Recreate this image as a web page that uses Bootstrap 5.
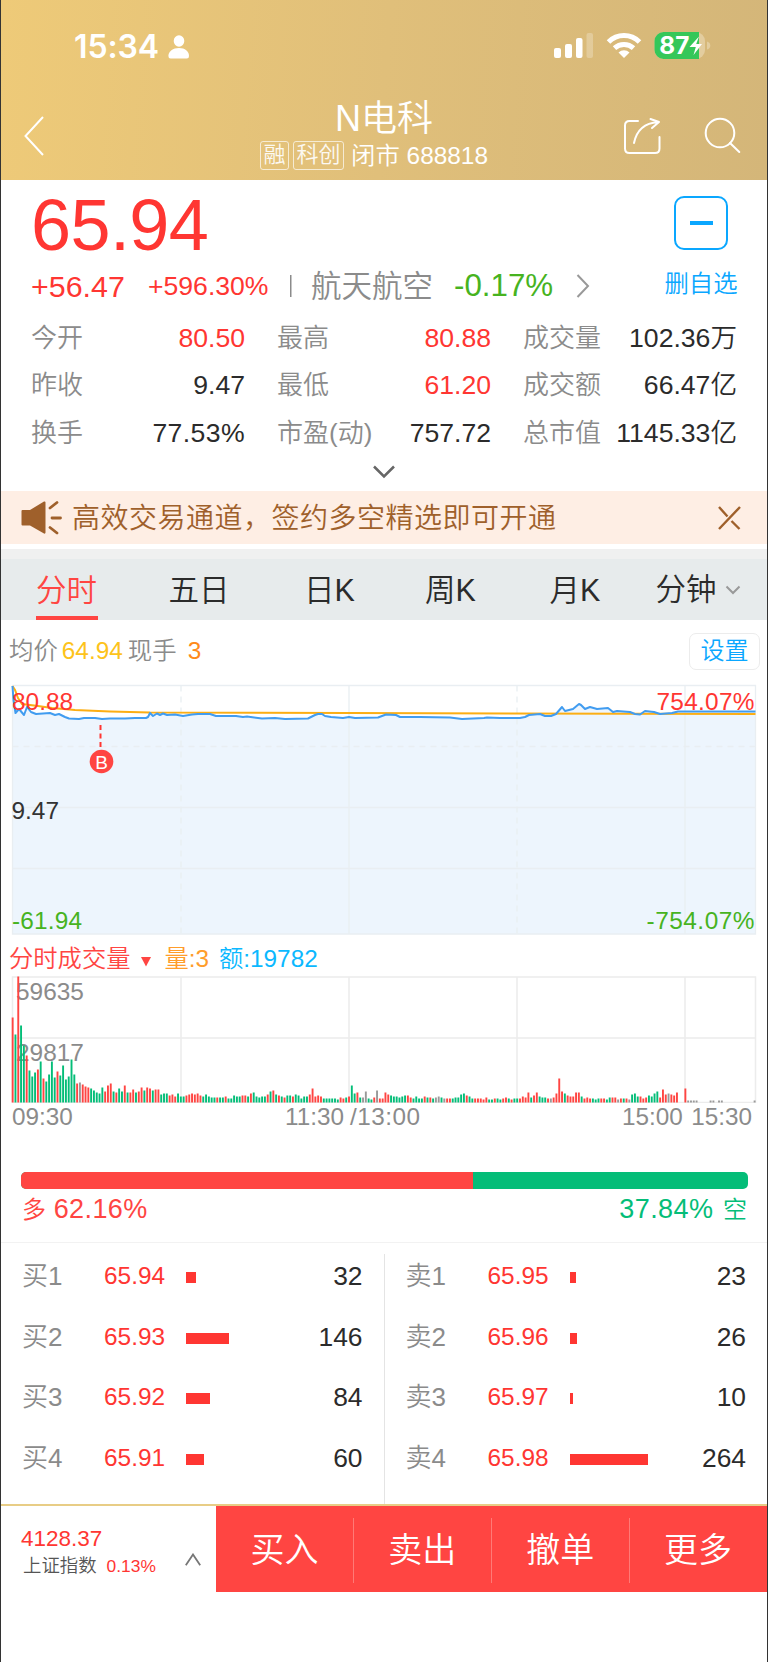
<!DOCTYPE html>
<html lang="zh-CN">
<head>
<meta charset="utf-8">
<meta name="viewport" content="width=device-width, initial-scale=1">
<title>N电科 688818</title>
<link href="https://cdn.jsdelivr.net/npm/bootstrap@5.3.0/dist/css/bootstrap.min.css" rel="stylesheet">
<style>
  body { font-family: "Liberation Sans", "Noto Sans CJK SC", sans-serif; font-weight: 350; color: #2b2b2b; line-height: 1; background: #fff; }
  .phone { height: 1662px; border-left: 1px solid #333; border-right: 1px solid #333; overflow: hidden; white-space: nowrap; }
  .up { color: #ff3632; } .down { color: #47b31f; } .dim { color: #8b8b8b; } .sky { color: #0aa7ff; }
  svg { display: block; flex: none; }
  .hero { height: 180px; background: linear-gradient(94deg, #eeca78, #e0bf7a 50%, #d4b679); color: #fff; }
  .status { height: 88px; padding: 0 56px 0 73px; font-family: Inter, sans-serif; }
  .clock { font-size: 32px; font-weight: 600; letter-spacing: -.1px; }
  .titlebar { height: 92px; padding: 0 26px 0 23px; }
  .stock-name { font-size: 36px; height: 40px; line-height: 40px; }
  .tagbox { border: 1.5px solid rgba(255,255,255,.75); border-radius: 3px; font-size: 22px; height: 29px; line-height: 26px; padding: 0 2.500px; opacity: .9; }
  .code { font-size: 24.4px; line-height: 30px; }
  .quote { height: 311px; padding: 0 30px 0 30px; }
  .last { font-size: 72px; line-height: 84px; height: 84px; letter-spacing: -.6px; margin-top: 3px; }
  .pill { width: 54px; height: 54px; border: 2px solid #0aa7ff; border-radius: 10px; }
  .pill i { width: 23px; height: 4px; background: #0aa7ff; }
  .chg { height: 40px; line-height: 40px; margin-top: -1px; }
  .facts { display: grid; grid-template-columns: repeat(3, 214px); column-gap: 32px; grid-auto-rows: 47.7px; align-items: center; font-size: 26.6px; margin-top: 8px; }
  .facts span { font-size: 26px; }
  .facts .pct { letter-spacing: .4px; }
  .notice { height: 53px; background: #feeee4; color: #9f602b; font-size: 28px; letter-spacing: .5px; padding: 0 26px 0 19px; }
  .band { height: 10px; background: #f0f0f0; margin-top: 5px; }
  .tabs { height: 61px; background: #e7ebec; display: grid; grid-template-columns: 132.5px 135.5px 121px 124.5px 106px auto; padding-left: 35px; font-size: 30.5px; }
  .tabs > div { height: 61px; line-height: 63px; }
  .tabs .on { width: 62px; color: #ff4542; border-bottom: 4px solid #ff4542; }
  .info { height: 60px; padding: 2px 7px 0 8px; font-size: 24.4px; }
  .setbtn { width: 71px; height: 37px; border: 1.5px solid #ececec; border-radius: 7px; line-height: 34px; text-align: center; font-size: 24px; }
  .voltitle { height: 34px; padding-left: 8px; font-size: 24.3px; }
  .axis { height: 28px; padding: 0 15px 0 11px; font-size: 24.3px; }
  .axis .mid { left: 284px; top: 0; }
  svg text { font-size: 24.4px; }
  .longshort { height: 17px; margin: 41px 19px 0 20px; border-radius: 5px; background: #04bd78; overflow: hidden; }
  .longshort div { background: #ff4542; }
  .longtext { height: 53px; padding: 0 20px 12px 21px; font-size: 24px; }
  .longtext b { font-weight: inherit; font-size: 27px; letter-spacing: .4px; }
  .book { height: 262px; border-top: 1px solid #f2f2f2; }
  .side { width: 382.5px; padding: 3px 21px 0 21px; }
  .side + .side { padding-left: 23px; }
  .lv { height: 60.6px; display: grid; grid-template-columns: 82px 82px 1fr auto; align-items: center; }
  .lv > :nth-child(1) { font-size: 26px; } .lv > :nth-child(2) { font-size: 24.4px; } .lv > :nth-child(4) { font-size: 26.4px; }
  .lv u { display: block; height: 11px; background: #ff3632; margin-top: 3px; }
  .midline { width: 1px; margin-top: 11px; background: #e4e4e4; }
  .dock { border-top: 2px solid #e8cd86; height: 88px; }
  .index { width: 214.5px; padding: 7px 15px 0 20px; }
  .act { flex: 1; background: #ff4542; color: #fff; font-size: 34px; line-height: 89px; text-align: center; position: relative; }
  .act + .act::before { content: ""; position: absolute; left: 0; top: 12px; height: 65px; width: 1px; background: #ff7a76; }
</style>
</head>
<body>
<div class="phone">
  <header class="hero">
    <div class="status d-flex align-items-center">
      <span class="clock" style="margin-top:5px">15:34</span>
      <svg class="ms-2" width="22" height="24" viewBox="0 0 22 24" fill="#fff" style="margin-top:5px"><ellipse cx="12" cy="6" rx="5.3" ry="5.8"/><path d="M1.400 21C1.400 16.500 6 13 12 13s10 3.500 10 8q0 2.500-2.200 2.500H3.600Q1.400 23.500 1.400 21z"/></svg>
      <svg class="ms-auto" width="158" height="30" viewBox="552 30 158 30" style="margin-top:2px">
        <g fill="#fff"><rect x="553" y="48" width="7" height="10" rx="2"/><rect x="564" y="44" width="7" height="14" rx="2"/><rect x="575" y="38" width="6.500" height="20" rx="2"/><rect x="585.500" y="33" width="6.500" height="25" rx="2" opacity=".25"/></g>
        <g fill="none" stroke="#fff" stroke-width="5"><path d="M607.500 42a22 22 0 0 1 31 0"/><path d="M613.500 48.200a14 14 0 0 1 19 0"/></g>
        <path d="M617.500 52.500a8 8 0 0 1 11 0L623 58z" fill="#fff"/>
        <rect x="653.500" y="32" width="50.500" height="27" rx="9" fill="#e3cd9f"/><path d="M662.500 32H698v27h-35.500a9 9 0 0 1-9-9v-9a9 9 0 0 1 9-9z" fill="#35c759"/>
        <path d="M706 41.500q3.300 1 3.300 4t-3.300 4z" fill="#e3cd9f"/>
        <text x="658.300" y="54.200" fill="#fff" style="font:700 24px Inter,sans-serif" textLength="30" lengthAdjust="spacingAndGlyphs">87</text>
        <path d="M698 36.500L688.500 47h6.300l-2.300 8L701 44h-5.800z" fill="#fff"/>
      </svg>
    </div>
    <div class="titlebar d-flex position-relative">
      <svg width="22" height="42" viewBox="24 115 22 42" style="margin-top:27px"><path d="M43 117L25.500 136 43 155" fill="none" stroke="#fff" stroke-width="2"/></svg>
      <div class="position-absolute start-0 end-0 d-flex flex-column align-items-center" style="top:11px">
        <div class="stock-name">N电科</div>
        <div class="d-flex align-items-center" style="margin-left:-20px">
          <span class="tagbox" style="margin-right:4px">融</span><span class="tagbox" style="margin-right:7px">科创</span><span class="code" style="margin-top:2px">闭市 688818</span>
        </div>
      </div>
      <svg class="ms-auto" width="118" height="42" viewBox="622 114 118 42" style="margin-top:26px" fill="none" stroke="#fff" stroke-width="2" stroke-linejoin="round" stroke-linecap="round">
        <path d="M637 121h-8.500q-4.500 0-4.500 4.500v23q0 4.500 4.500 4.500H654q4.500 0 4.500-4.500V137M633 143q4-19.500 24-21M649.500 119l8.500 3-7 6"/>
        <circle cx="719" cy="133" r="14.300"/><path d="M729 143l9.300 9"/>
      </svg>
    </div>
  </header>

  <section class="quote">
    <div class="d-flex">
      <div>
        <div class="last up">65.94</div>
        <div class="chg d-flex align-items-center">
          <span class="up" style="font-size:30.4px;width:117px">+56.47</span>
          <span class="up" style="font-size:26.6px;width:142px">+596.30%</span>
          <svg width="2" height="22"><rect width="1.500" height="22" fill="#8b8b8b"/></svg>
          <span class="dim" style="font-size:30.500px;margin-left:19px;width:143px">航天航空</span>
          <span class="down" style="font-size:31.300px;width:122px">-0.17%</span>
          <svg width="14" height="24" fill="none" stroke="#999" stroke-width="2"><path d="M1.500 1L12 12 1.500 23"/></svg>
        </div>
      </div>
      <div class="ms-auto d-flex flex-column align-items-center" style="margin:16px -1px 0 0;width:74px">
        <div class="pill d-flex align-items-center justify-content-center"><i></i></div>
        <div class="sky" style="font-size:24.400px;margin-top:22px">删自选</div>
      </div>
    </div>
    <div class="facts">
      <div class="d-flex justify-content-between"><span class="dim">今开</span><div class="up">80.50</div></div>
      <div class="d-flex justify-content-between"><span class="dim">最高</span><div class="up">80.88</div></div>
      <div class="d-flex justify-content-between"><span class="dim">成交量</span><div>102.36万</div></div>
      <div class="d-flex justify-content-between"><span class="dim">昨收</span><div>9.47</div></div>
      <div class="d-flex justify-content-between"><span class="dim">最低</span><div class="up">61.20</div></div>
      <div class="d-flex justify-content-between"><span class="dim">成交额</span><div>66.47亿</div></div>
      <div class="d-flex justify-content-between"><span class="dim">换手</span><div class="pct">77.53%</div></div>
      <div class="d-flex justify-content-between"><span class="dim">市盈(动)</span><div>757.72</div></div>
      <div class="d-flex justify-content-between"><span class="dim">总市值</span><div>1145.33亿</div></div>
    </div>
    <svg class="mx-auto" width="22" height="14" style="margin-top:8px" fill="none" stroke="#666" stroke-width="2.500"><path d="M1 1.500l10 10 10-10"/></svg>
  </section>

  <div class="notice d-flex align-items-center">
    <svg width="44" height="36" viewBox="20 500 44 36"><path d="M22.500 510H30l14-8.500q1.500-.5 1.500 1v30q0 1.500-1.500 1L30 525.500h-7.500q-1 0-1-1V511q0-1 1-1z" fill="#9f602b"/><path d="M50 508l7-5.500M52 518h8.500M50 527.500l7 5.500" stroke="#9f602b" stroke-width="2.800" stroke-linecap="round"/></svg>
    <span style="margin:2px 0 0 8px">高效交易通道，签约多空精选即可开通</span>
    <svg class="ms-auto" width="23" height="24" fill="none" stroke="#9f602b" stroke-width="2.400"><path d="M1 1l8.500 9.500M13.500 15l8 8M22 1L1 23"/></svg>
  </div>
  <div class="band"></div>
  <nav class="tabs">
    <div class="on">分时</div><div>五日</div><div>日K</div><div>周K</div><div>月K</div>
    <div class="d-flex align-items-center">分钟<svg width="16" height="10" style="margin-left:8px" fill="none" stroke="#999" stroke-width="2"><path d="M1.500 1.500L8 8l6.500-6.500"/></svg></div>
  </nav>

  <div class="info d-flex align-items-center">
    <span class="dim">均价</span><span style="color:#fdc31b;margin-left:4px">64.94</span><span class="dim" style="margin-left:5px">现手</span><span style="color:#ff8a1a;margin-left:11px">3</span>
    <div class="setbtn sky ms-auto">设置</div>
  </div>

  <svg width="766" height="262" viewBox="1 680 766 262">
    <path id="area" fill="#edf5fd"/>
    <g fill="none" stroke="#e9eef2" stroke-width="1.300"><path d="M12.500 685.500H755.500V934H12.500zM12.500 807.500h743M12.500 868.500h743M349 685.500V934M685 685.500V934"/><path stroke-dasharray="6 5" d="M12.500 746.500h743M181 685.500V934M517 685.500V934"/></g>
    <path d="M12.500 686L15 690 18 698 22 704 38 706 52 708 75 710 110 711.500 150 712.500 349 713 755.500 714" fill="none" stroke="#fcae14" stroke-width="2"/>
    <path id="price" fill="none" stroke="#419cf0" stroke-width="2" stroke-linejoin="round"/>
    <g class="up" fill="currentColor"><text x="12" y="709.500">80.88</text><text x="754.500" y="709.500" text-anchor="end" textLength="98">754.07%</text></g>
    <text x="11.500" y="819" fill="#333">9.47</text>
    <g class="down" fill="currentColor"><text x="12" y="929" textLength="70">-61.94</text><text x="754.500" y="929" text-anchor="end" textLength="108">-754.07%</text></g>
    <path d="M100.500 725v22" stroke="#ff3632" stroke-width="2" stroke-dasharray="5 3.500"/><circle cx="101.500" cy="761.500" r="11.800" fill="#ff4542"/>
    <text x="101.700" y="768.700" text-anchor="middle" fill="#fff" style="font-size:19px">B</text>
  </svg>

  <div class="voltitle d-flex align-items-center">
    <span style="color:#ff4542">分时成交量</span>
    <svg width="10" height="10" style="margin:5px 13px 0 11px"><path d="M0 0h10L5 9.500z" fill="#ff4542"/></svg>
    <span style="color:#ff9d2b;margin-right:10px">量:3</span><span style="color:#0bb8ff">额:19782</span>
  </div>
  <svg width="766" height="127" viewBox="1 976 766 127">
    <path d="M12.500 977H755.500V1102.500H12.500zM12.500 1038h743M181 977v125M349 977v125M517 977v125M685 977v125" fill="none" stroke="#ececec" stroke-width="1.500"/>
    <g class="dim" fill="currentColor"><text x="16" y="1000">59635</text><text x="16" y="1061">29817</text></g>
    <g id="bars"></g>
  </svg>
  <div class="axis dim d-flex align-items-center position-relative">
    <span>09:30</span><span class="position-absolute mid" style="line-height:28px">11:30<span style="margin-left:6px;letter-spacing:.5px">/13:00</span></span>
    <span class="ms-auto">15:00</span><span style="margin-left:8.500px">15:30</span>
  </div>

  <div class="longshort"><div class="h-100" style="width:62.16%"></div></div>
  <div class="longtext d-flex justify-content-between align-items-center">
    <div style="color:#ff4542">多 <b style="margin-left:1px">62.16%</b></div><div style="color:#04bd78"><b>37.84%</b> <span style="margin-left:3px">空</span></div>
  </div>

  <section class="book d-flex">
    <div class="side">
      <div class="lv"><span class="dim">买1</span><span class="up">65.94</span><u style="width:9.500px"></u><span>32</span></div>
      <div class="lv"><span class="dim">买2</span><span class="up">65.93</span><u style="width:43px"></u><span>146</span></div>
      <div class="lv"><span class="dim">买3</span><span class="up">65.92</span><u style="width:24px"></u><span>84</span></div>
      <div class="lv"><span class="dim">买4</span><span class="up">65.91</span><u style="width:18px"></u><span>60</span></div>
    </div>
    <div class="midline"></div>
    <div class="side">
      <div class="lv"><span class="dim">卖1</span><span class="up">65.95</span><u style="width:6.500px"></u><span>23</span></div>
      <div class="lv"><span class="dim">卖2</span><span class="up">65.96</span><u style="width:7.500px"></u><span>26</span></div>
      <div class="lv"><span class="dim">卖3</span><span class="up">65.97</span><u style="width:3px"></u><span>10</span></div>
      <div class="lv"><span class="dim">卖4</span><span class="up">65.98</span><u style="width:78px"></u><span>264</span></div>
    </div>
  </section>

  <footer class="dock d-flex">
    <div class="index d-flex align-items-center">
      <div>
        <div class="up" style="font-size:22.500px;line-height:27px">4128.37</div>
        <div class="d-flex align-items-center" style="line-height:28px"><span style="color:#555;font-size:18.400px;margin-left:2px">上证指数</span><span class="up" style="font-size:17.400px;margin-left:10px">0.13%</span></div>
      </div>
      <svg class="ms-auto" width="16" height="13" style="margin-top:14px" fill="none" stroke="#777" stroke-width="1.800"><path d="M.8 12.300L8 1.500l7.200 10.800"/></svg>
    </div>
    <div class="act">买入</div><div class="act">卖出</div><div class="act">撤单</div><div class="act">更多</div>
  </footer>
</div>
<script>
  // Intraday price line: x,y pairs
  const line = "12.5,686 13.5,700 15.5,713 19,709 24,715 27,707 31,712 36,714 50,713 55,715 59,714 65,717 69,718.5 79,719 84,718 95,718 102,719 110,718.5 125,718.5 135,718 146,718 148,717 150,713 153,716 157,713.5 160,715 163,713.5 167,715 175,714.5 183,716 192,714.5 198,714 210,714 216,716 236,716 243,717 247,716.5 262,718.5 275,718 285,719 308,718.5 315,715 318,714 322,714 325,716 331,717 343,718 349,717 355,718 378,717.5 386,714.5 396,715 400,717 420,717 450,717.5 462,719 484,718 487,717.5 500,718 520,718 525,717 529,715 540,714 545,716 551,716 556,714 562,707 565,711 573,709 579,704 581,705 585,709 590,707 597,709 608,708 613,712 617,711 630,712 635,714 640,714.5 645,711 654,712 660,714 672,713 678,711.5 755.5,711.5";
  const d = "M" + line.replace(/ /g, " L");
  document.getElementById("price").setAttribute("d", d);
  document.getElementById("area").setAttribute("d", d + " V934 H12.5Z");
  // Volume per minute: start minute, then direction + height (r up, g down, n flat)
  const vol = {
    0: "r85 g68 r126 g77 g57 r47 g32 g26 g30 r33 g41 r24 g21 g28 g41 g25 r31 g27 g37 g23 g26 g43 g28 r19 n20 r18 r16 r15 g14 g12 g10 g9 g15 r11 r17 r19 g11 r10 g14 g11 r17 g10 r10 r13 g10 r11 r15 g12 r15 r14 g12 r13 r13 g8 g9 g9 r7 r8 r6 g9 g6 g6 r7 r8 r9 r8 r9 r7",
    68: "g6 g8 g6 g5 g5 r5 g5 g5 r6 g4 g4 g7 g6 g6 r7 r7 g6 r9 g10 g6 g5 g6 g6 r8 g11 r12 g8 r7 g6 r5 g7 g7 r6 g8 g7 g4 g6 g6 r8 r14 r6 r7 r6 g4 g4 g4 g4 g4 g3 r5 r4 g5",
    120: "r6 g17 g9 r10 g5 n5 n11 g4 g3 r5 n12 r4 r4",
    133: "r10 r8 g7 g6 g6 g5 g6 g7 r7 r5 g4 g6 g4 g4 r6 g5 r5 g4 n5 n6 g5 n4 r4 r4 g4 g5 g5 g8 g9 r7 g6 g4 r4 r4 r4 r3 r5 g3 g3 r4 g4 g3 r4 r5 g4 r3 g4",
    180: "g4 r4 r6 r5 r10 g5 r7 r10 g6 g5 g5 r4 n4 r5 r9 r24 r11 g9 r7 r6 r6 r10 r10 g6 r4 r5 r4 g4 g3 g4 r4 r4 g3 g5 r5 r5 n3 r4 g4 r4 n3 g8 g9 g6 r6 r4 r5 g7 g6 g9 g11 r5 r13 r8 n9 r8 r7 r10",
    240: "r14 n2 n2 n2 n2", 249: "n2 n2 n0 n2 n2", 264.7: "n2"
  };
  const tint = { r: "#ff4542", g: "#04bd78", n: "#999" };
  let out = "";
  for (const start in vol) vol[start].split(" ").forEach((v, i) => {
    const h = +v.slice(1), x = 12.6 + 2.803 * (+start + i);
    out += `<rect x="${(x - .9).toFixed(2)}" y="${1102.5 - h}" width="1.9" height="${h}" fill="${tint[v[0]]}"/>`;
  });
  document.getElementById("bars").innerHTML = out;
</script>
<script src="https://cdn.jsdelivr.net/npm/bootstrap@5.3.0/dist/js/bootstrap.bundle.min.js"></script>
</body>
</html>
